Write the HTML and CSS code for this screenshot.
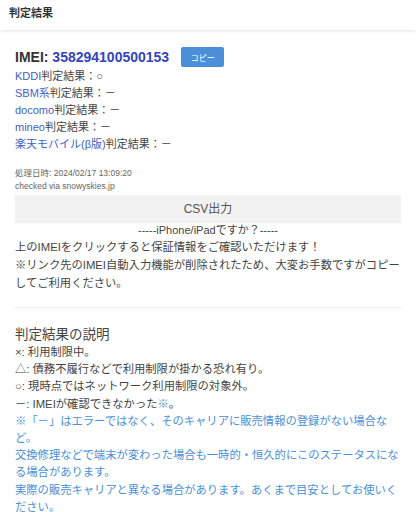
FILE: index.html
```html
<!DOCTYPE html>
<html>
<head>
	<meta charset="utf-8">
	<link rel="stylesheet" href="styles.css">
</head>
<body class="body">

	<div class="headerDiv">判定結果</div>

	<div class="contentDiv">
		<div class="imeiRow">
			<span class="imeiLabel">IMEI: <a class="imeiNumber">358294100500153</a></span>
			<button class="copyButton">コピー</button>
		</div>

		<div class="resultList">
			<div><a class="carrier">KDDI</a>判定結果：○</div>
			<div><a class="carrier">SBM系</a>判定結果：－</div>
			<div><a class="carrier">docomo</a>判定結果：－</div>
			<div><a class="carrier">mineo</a>判定結果：－</div>
			<div><a class="carrier">楽天モバイル(β版)</a>判定結果：－</div>
		</div>

		<div class="metaDiv">
			<div>処理日時: 2024/02/17 13:09:20</div>
			<div>checked via snowyskies.jp</div>
		</div>

		<div class="csvButton">CSV出力</div>

		<div class="iphoneTitle">-----iPhone/iPadですか？-----</div>
		<div class="textBlock">
			上のIMEIをクリックすると保証情報をご確認いただけます！<br>
			※リンク先のIMEI自動入力機能が削除されたため、大変お手数ですがコピーしてご利用ください。
		</div>

		<div class="divider"></div>

		<div class="explainTitle">判定結果の説明</div>
		<div class="textBlock explainList">
			<div>×: 利用制限中。</div>
			<div>△: 債務不履行などで利用制限が掛かる恐れ有り。</div>
			<div>○: 現時点ではネットワーク利用制限の対象外。</div>
			<div>－: IMEIが確認できなかった<span class="note">※</span>。</div>
			<div class="note">※「－」はエラーではなく、そのキャリアに販売情報の登録がない場合など。</div>
			<div class="note">交換修理などで端末が変わった場合も一時的・恒久的にこのステータスになる場合があります。</div>
			<div class="note">実際の販売キャリアと異なる場合があります。あくまで目安としてお使いください。</div>
		</div>
	</div>

</body>
</html>
```

FILE: styles.css
```css
.body {
	margin: 0;
	background-color: #FFFFFF;
	color: #444444;
	font-family: "Liberation Sans", "Noto Sans CJK JP", sans-serif;
	font-size: 11.3px;
}

.headerDiv {
	height: 30px;
	line-height: 26px;
	padding-left: 9px;
	font-size: 11px;
	font-weight: bold;
	color: #333333;
	box-shadow: 0 1px 3px rgba(0, 0, 0, 0.12);
}

.contentDiv {
	padding: 15px 15px 0 15px;
}

.imeiRow {
	display: flex;
	align-items: center;
	height: 24px;
}

.imeiLabel {
	font-size: 14px;
	font-weight: bold;
	color: #333333;
}

.imeiNumber {
	color: #3346BB;
}

.copyButton {
	margin-left: 12px;
	width: 43px;
	height: 20px;
	padding: 0;
	border: none;
	border-radius: 2px;
	background-color: #4A90D9;
	color: #FFFFFF;
	font-family: "Liberation Sans", "Noto Sans CJK JP", sans-serif;
	font-size: 8px;
}

.resultList {
	font-size: 11px;
	line-height: 17px;
	margin-top: -1px;
}

.carrier {
	color: #3F62C6;
}

.metaDiv {
	margin-top: 14px;
	font-size: 8.5px;
	line-height: 13px;
	color: #666666;
}

.csvButton {
	margin-top: 2px;
	height: 28px;
	line-height: 28px;
	text-align: center;
	background-color: #F2F2F2;
	font-size: 12px;
	color: #555555;
}

.iphoneTitle {
	text-align: center;
	font-size: 11px;
	line-height: 15px;
}

.textBlock {
	line-height: 18px;
}

.divider {
	margin-top: 15px;
	height: 1px;
	background-color: #EEEEEE;
}

.explainTitle {
	margin-top: 18px;
	font-size: 13.5px;
	line-height: 18px;
	color: #444444;
}

.explainList {
	line-height: 17.2px;
}

.note {
	color: #4A8FD8;
}
```
